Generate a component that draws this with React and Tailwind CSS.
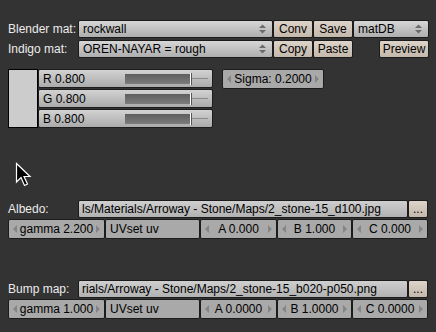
import React from "react";

const FONT = { fontFamily: '"Liberation Sans", Arial, sans-serif' };

const Updown = () => (
  <svg width="7" height="10" viewBox="0 0 7 10" className="shrink-0">
    <path d="M0 4 L3.5 0.5 L7 4 Z" fill="#6b6b6b" />
    <path d="M0 6 L3.5 9.5 L7 6 Z" fill="#6b6b6b" />
  </svg>
);

const Menu = ({ w, text }) => (
  <div
    className={`${w} shrink-0 h-full flex items-center justify-between pl-[4px] pr-[6px] border border-[#1c1c1c] rounded-[2px] bg-gradient-to-b from-[#d6d6d6] to-[#aeaeae] text-black text-[12px] overflow-hidden whitespace-nowrap`}
  >
    <span>{text}</span>
    <Updown />
  </div>
);

const Btn = ({ w, text }) => (
  <div
    className={`${w} shrink-0 h-full flex items-center justify-center border border-[#1c1c1c] rounded-[2px] bg-gradient-to-b from-[#ddd3c8] to-[#c4b8ab] text-black text-[12px] whitespace-nowrap`}
  >
    {text}
  </div>
);

const Arrow = ({ dir }) => (
  <svg width="4" height="8" viewBox="0 0 4 8" className="shrink-0">
    <path d={dir === "l" ? "M4 0 L0 4 L4 8 Z" : "M0 0 L4 4 L0 8 Z"} fill="#858585" />
  </svg>
);

const Num = ({ w, text }) => (
  <div
    className={`${w} shrink-0 h-full flex items-center justify-between px-[4px] border border-[#1c1c1c] rounded-[2px] bg-[#a9a9a9] text-black text-[12px] whitespace-nowrap`}
  >
    <Arrow dir="l" />
    <span>{text}</span>
    <Arrow dir="r" />
  </div>
);

const Field = ({ w, text }) => (
  <div
    className={`${w} shrink-0 h-full flex items-center pl-[4px] border border-[#1c1c1c] rounded-[2px] bg-[#a9a9a9] text-black text-[12px] overflow-hidden whitespace-nowrap`}
  >
    {text}
  </div>
);

const PathField = ({ text }) => (
  <div className="w-[330px] shrink-0 h-full flex items-center pl-[3px] border border-[#1c1c1c] rounded-[2px] bg-gradient-to-b from-[#cfcfcf] to-[#b2b2b2] text-black text-[12px] overflow-hidden whitespace-nowrap">
    {text}
  </div>
);

const Slider = ({ label }) => (
  <div className="w-[175px] h-[19px] flex items-center pl-[4px] border border-[#1c1c1c] rounded-[2px] bg-gradient-to-b from-[#d2d2d2] to-[#ababab] text-black text-[12px]">
    <span className="w-[82px]">{label}</span>
    <div className="flex items-center">
      <div className="w-[65px] h-[10px] bg-gradient-to-b from-[#5e5e5e] to-[#7c7c7c]" />
      <div className="w-[1px] h-[12px] bg-white" />
      <div className="w-[1px] h-[12px] bg-[#555]" />
      <div className="w-[16px] h-[1px] bg-[#8a8a8a]" />
    </div>
  </div>
);

const Label = ({ text }) => (
  <div className="w-[70px] shrink-0 whitespace-nowrap text-[12px] leading-[18px] text-[#ececec]">
    {text}
  </div>
);

export default function App() {
  return (
    <div
      className="relative w-[436px] h-[332px] overflow-hidden bg-[#333333] pt-[20px] pl-[8px]"
      style={FONT}
    >
      <div className="flex h-[18px]">
        <Label text="Blender mat:" />
        <Menu w="w-[195px]" text="rockwall" />
        <Btn w="w-[40px]" text="Conv" />
        <Btn w="w-[40px]" text="Save" />
        <Menu w="w-[76px]" text="matDB" />
      </div>
      <div className="flex h-[18px] mt-[2px]">
        <Label text="Indigo mat:" />
        <Menu w="w-[195px]" text="OREN-NAYAR = rough" />
        <Btn w="w-[40px]" text="Copy" />
        <Btn w="w-[40px]" text="Paste" />
        <div className="w-[26px] shrink-0" />
        <Btn w="w-[50px]" text="Preview" />
      </div>

      <div className="flex items-start mt-[11px]">
        <div className="w-[30px] h-[59px] bg-[#cccccc] border border-black" />
        <div className="flex flex-col gap-[1px]">
          <Slider label="R 0.800" />
          <Slider label="G 0.800" />
          <Slider label="B 0.800" />
        </div>
        <div className="ml-[9px] h-[20px] flex">
          <Num w="w-[102px]" text="Sigma: 0.2000" />
        </div>
      </div>

      <div className="flex h-[18px] mt-[72px]">
        <Label text="Albedo:" />
        <PathField text="ls/Materials/Arroway - Stone/Maps/2_stone-15_d100.jpg" />
        <Btn w="w-[20px]" text="..." />
      </div>
      <div className="flex h-[20px] mt-[1px]">
        <Num w="w-[97px]" text="gamma 2.200" />
        <Field w="w-[95px]" text="UVset uv" />
        <Num w="w-[77px]" text="A 0.000" />
        <Num w="w-[75px]" text="B 1.000" />
        <Num w="w-[76px]" text="C 0.000" />
      </div>

      <div className="flex h-[18px] mt-[41px]">
        <Label text="Bump map:" />
        <PathField text="rials/Arroway - Stone/Maps/2_stone-15_b020-p050.png" />
        <Btn w="w-[20px]" text="..." />
      </div>
      <div className="flex h-[20px] mt-[1px]">
        <Num w="w-[97px]" text="gamma 1.000" />
        <Field w="w-[95px]" text="UVset uv" />
        <Num w="w-[77px]" text="A 0.0000" />
        <Num w="w-[75px]" text="B 1.0000" />
        <Num w="w-[76px]" text="C 0.0000" />
      </div>

      <svg
        className="absolute left-[15px] top-[162px]"
        width="17"
        height="26"
        viewBox="0 0 17 26"
      >
        <path
          d="M1.5 1.5 L1.5 20 L6 15.5 L9.5 23.5 L12.5 22 L9 14.5 L15 14.5 Z"
          fill="#000"
          stroke="#fff"
          strokeWidth="1.2"
          strokeLinejoin="miter"
        />
      </svg>
    </div>
  );
}
